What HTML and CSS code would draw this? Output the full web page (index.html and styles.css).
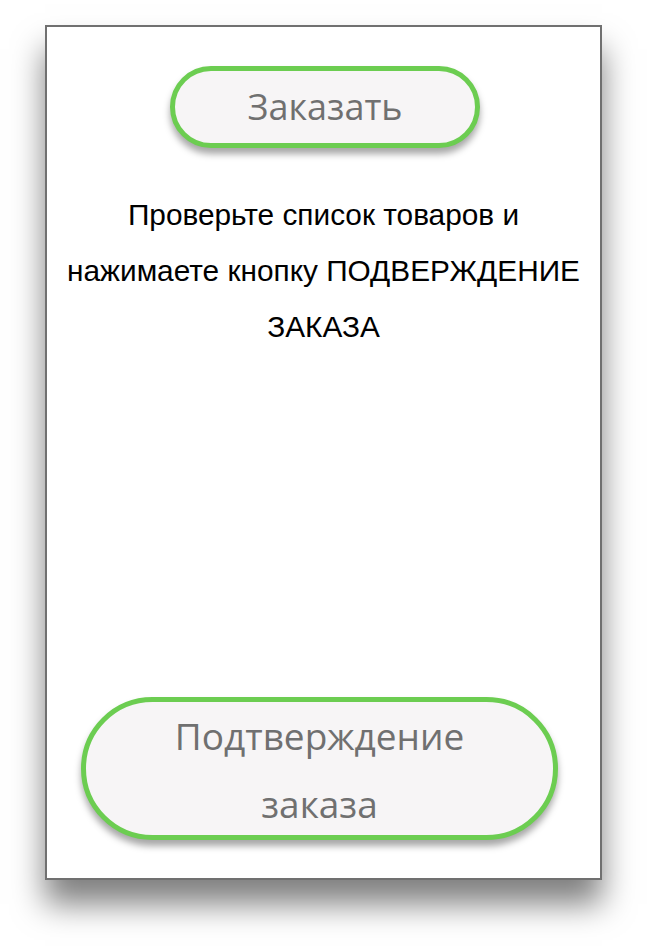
FILE: index.html
```html
<!DOCTYPE html>
<html lang="ru">
<head>
<meta charset="utf-8">
<link rel="stylesheet" href="styles.css">
</head>
<body>
<div class="frame">
  <button class="btn btn-top">Заказать</button>
  <p class="hint">Проверьте список товаров и нажимаете кнопку ПОДВЕРЖДЕНИЕ ЗАКАЗА</p>
  <button class="btn btn-bottom">Подтверждение заказа</button>
</div>
</body>
</html>
```

FILE: styles.css
```css
html, body {
  margin: 0;
  padding: 0;
  background: #ffffff;
}
body {
  min-height: 946px;
  padding-top: 25px;
  box-sizing: border-box;
}
.frame {
  box-sizing: border-box;
  margin: 0 0 0 45px;
  width: 557px;
  height: 855px;
  border: 2px solid #707070;
  background: #ffffff;
  box-shadow: 0 24px 30px rgba(0, 0, 0, 0.5);
  display: flex;
  flex-direction: column;
  align-items: center;
}
.btn {
  box-sizing: border-box;
  border: 5px solid #6ccd51;
  background: #f7f5f6;
  color: #707070;
  font-family: "Open Sans", sans-serif;
  font-size: 36px;
  border-radius: 80px;
  box-shadow: 0 6px 7px rgba(0, 0, 0, 0.35);
  padding: 0;
  text-align: center;
}
.btn-top {
  margin-top: 39px;
  margin-left: 3px;
  width: 310px;
  height: 82px;
  line-height: 70px;
}
.hint {
  margin: 39px 0 0 0;
  width: 535px;
  font-family: "Liberation Sans", Arial, sans-serif;
  font-size: 29.8px;
  line-height: 56px;
  color: #000000;
  text-align: center;
}
.btn-bottom {
  margin-top: auto;
  margin-bottom: 38px;
  margin-right: 8px;
  width: 477px;
  height: 143px;
  line-height: 68px;
  font-size: 37px;
  padding: 0 40px;
}
```
